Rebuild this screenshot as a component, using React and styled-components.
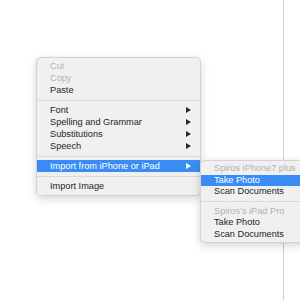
import React from 'react';
import styled, { createGlobalStyle } from 'styled-components';

const GlobalStyle = createGlobalStyle`
  html, body {
    margin: 0;
    padding: 0;
    background: #ffffff;
    overflow: hidden;
  }
  body {
    font-family: "Liberation Sans", Arial, sans-serif;
  }
`;

const Page = styled.div`
  position: relative;
  width: 300px;
  height: 300px;
  overflow: hidden;
  background: #ffffff;
`;

// the document area, its right edge is the thin grey line
const DocArea = styled.div`
  width: 284px;
  height: 300px;
  border-right: 1px solid #cfcfcf;
  box-sizing: border-box;
`;

const Menu = styled.ul`
  position: absolute;
  left: ${(p) => p.$left}px;
  top: ${(p) => p.$top}px;
  width: ${(p) => p.$width}px;
  margin: 0;
  padding: ${(p) => p.$pad};
  list-style: none;
  box-sizing: border-box;
  background: rgba(240, 240, 240, 0.97);
  border: 1px solid #d3d3d3;
  border-radius: 5px;
  box-shadow: 0 3px 10px rgba(0, 0, 0, 0.16), 0 0 1px rgba(0, 0, 0, 0.12);
  font-size: 9.2px;
  z-index: ${(p) => p.$z || 1};
`;

const Item = styled.li`
  position: relative;
  height: ${(p) => p.$h}px;
  line-height: ${(p) => p.$h}px;
  padding-left: 13px;
  display: flex;
  align-items: center;
  justify-content: space-between;
  padding-right: 9px;
  white-space: nowrap;
  color: ${(p) => (p.$active ? '#ffffff' : p.$disabled ? '#b3b3b3' : '#242424')};
  background: ${(p) => (p.$active ? '#3a8cf5' : 'transparent')};
`;

const Arrow = styled.span`
  width: 0;
  height: 0;
  border-top: 3px solid transparent;
  border-bottom: 3px solid transparent;
  border-left: 5px solid ${(p) => (p.$active ? '#ffffff' : '#2a2a2a')};
`;

const Separator = styled.li`
  height: ${(p) => p.$h}px;
  display: flex;
  align-items: center;

  &::after {
    content: '';
    flex: 1;
    height: 1px;
    background: #d9d9d9;
  }
`;

const mainItems = [
  { label: 'Cut', disabled: true },
  { label: 'Copy', disabled: true },
  { label: 'Paste' },
  { sep: true },
  { label: 'Font', sub: true },
  { label: 'Spelling and Grammar', sub: true },
  { label: 'Substitutions', sub: true },
  { label: 'Speech', sub: true },
  { sep: true },
  { label: 'Import from iPhone or iPad', sub: true, active: true },
  { sep: true },
  { label: 'Import Image' },
];

const subItems = [
  { label: 'Spiros iPhone7 plus', disabled: true },
  { label: 'Take Photo', active: true },
  { label: 'Scan Documents' },
  { sep: true },
  { label: 'Spiros\u2019s iPad Pro', disabled: true },
  { label: 'Take Photo' },
  { label: 'Scan Documents' },
];

const renderItems = (items, rowH, sepH) =>
  items.map((it, i) =>
    it.sep ? (
      <Separator key={i} $h={sepH} />
    ) : (
      <Item key={i} $h={rowH} $active={it.active} $disabled={it.disabled}>
        <span>{it.label}</span>
        {it.sub && <Arrow $active={it.active} />}
      </Item>
    )
  );

export default function App() {
  return (
    <>
      <GlobalStyle />
      <Page>
        <DocArea />
        <Menu $left={36} $top={57} $width={165} $pad="2px 0 3px">
          {renderItems(mainItems, 12, 8)}
        </Menu>
        <Menu $left={200} $top={160} $width={110} $pad="2px 0 2px" $z={2}>
          {renderItems(subItems, 11.5, 8)}
        </Menu>
      </Page>
    </>
  );
}
